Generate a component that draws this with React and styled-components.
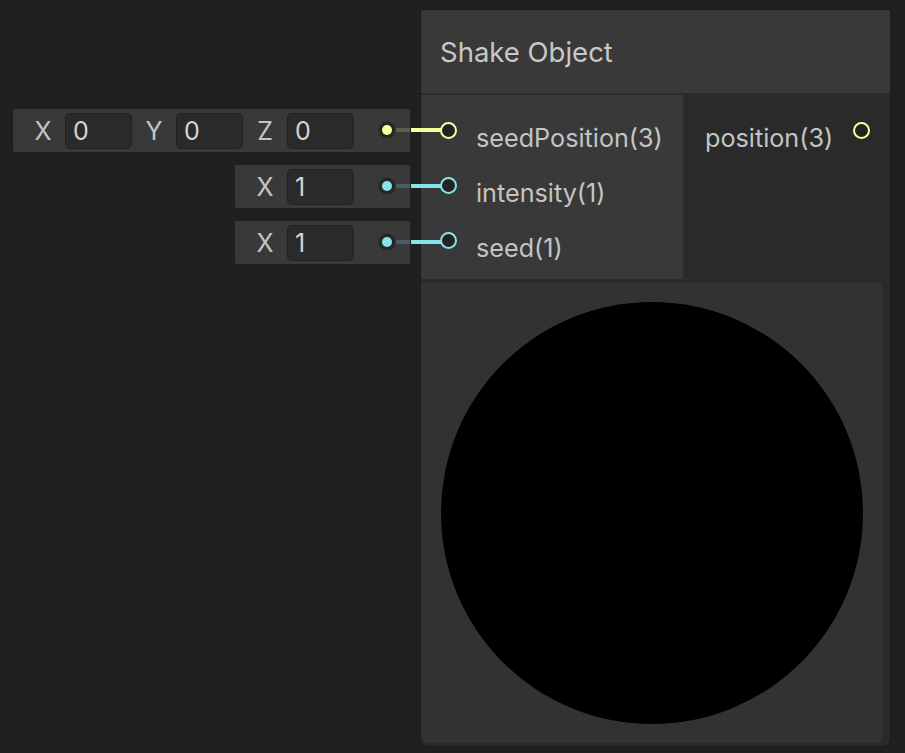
import React from "react";
import styled, { createGlobalStyle } from "styled-components";

const YELLOW = "#f6ff9a";
const CYAN = "#84e4e7";

const GlobalStyle = createGlobalStyle`
  html, body {
    margin: 0;
    padding: 0;
    background: #202020;
  }
  body {
    font-family: Inter, "Noto Sans", sans-serif;
    color: #c4c4c4;
  }
`;

const Canvas = styled.div`
  width: 905px;
  height: 753px;
  display: flex;
  align-items: flex-start;
  gap: 11px;
  padding: 10px 0 0 12px;
  box-sizing: border-box;
  overflow: hidden;
`;

const Inputs = styled.div`
  width: 398px;
  margin-top: 99px;
  display: flex;
  flex-direction: column;
  align-items: flex-end;
  gap: 13px;
`;

const InputRow = styled.div`
  position: relative;
  height: 43px;
  display: flex;
  align-items: center;
  padding-left: 8px;
  padding-right: 56px;
  background: #393939;
  border-radius: 2px;
`;

const Axis = styled.span`
  width: 44px;
  text-align: center;
  font-size: 25px;
  color: #c4c4c4;
`;

const Field = styled.div`
  width: 67px;
  height: 36px;
  box-sizing: border-box;
  border: 1px solid #212121;
  border-radius: 5px;
  background: #2a2a2a;
  padding-left: 7px;
  display: flex;
  align-items: center;
  font-size: 25px;
  color: #d4d4d4;
`;

const Edge = styled.svg`
  position: absolute;
  right: -48px;
  top: 11px;
  overflow: visible;
`;

const Node = styled.div`
  width: 469px;
  height: 736px;
  background: #2a2a2a;
  border-radius: 2px 2px 7px 7px;
  box-shadow: 0 0 0 1px #1c1c1c;
  display: flex;
  flex-direction: column;
  overflow: hidden;
`;

const Title = styled.div`
  height: 83px;
  flex-shrink: 0;
  background: #393939;
  border-bottom: 2px solid #2b2b2b;
  padding-left: 19px;
  display: flex;
  align-items: center;
  font-size: 27.5px;
  color: #c8c8c8;
`;

const Ports = styled.div`
  height: 184px;
  flex-shrink: 0;
  display: flex;
  border-bottom: 4px solid #2b2b2b;
`;

const InColumn = styled.div`
  width: 262px;
  background: #393939;
  border-right: 2px solid #2b2b2b;
  padding-top: 9px;
  display: flex;
  flex-direction: column;
`;

const OutColumn = styled.div`
  flex: 1;
  background: #2a2a2a;
  padding-top: 9px;
  display: flex;
  flex-direction: column;
`;

const PortRow = styled.div`
  height: 55px;
  display: flex;
  align-items: flex-start;
  gap: 19px;
  padding: 0 ${(p) => (p.$out ? "20px" : "0")} 0 ${(p) => (p.$out ? "20px" : "19px")};
  justify-content: ${(p) => (p.$out ? "space-between" : "flex-start")};
`;

const Socket = styled.div`
  width: 17px;
  height: 17px;
  margin-top: 18px;
  box-sizing: border-box;
  border-radius: 50%;
  border: 2px solid ${(p) => p.$color};
  background: #232323;
  flex-shrink: 0;
`;

const PortLabel = styled.span`
  font-size: 25.2px;
  line-height: 28px;
  margin-top: 20px;
  color: #c4c4c4;
`;

const Preview = styled.div`
  width: 461px;
  flex: 1;
  background: #323232;
  border-bottom-left-radius: 6px;
  border-bottom-right-radius: 6px;
  margin-bottom: 3px;
  display: flex;
  align-items: center;
  justify-content: center;
`;

const Ball = styled.div`
  width: 422px;
  height: 422px;
  border-radius: 50%;
  background: #000;
`;

const rows = [
  { fields: [["X", "0"], ["Y", "0"], ["Z", "0"]], color: YELLOW, dim: "#5e6046" },
  { fields: [["X", "1"]], color: CYAN, dim: "#475f60" },
  { fields: [["X", "1"]], color: CYAN, dim: "#475f60" },
];

const ports = [
  { name: "seedPosition(3)", color: YELLOW },
  { name: "intensity(1)", color: CYAN },
  { name: "seed(1)", color: CYAN },
];

function ValueRow({ fields, color, dim }) {
  return (
    <InputRow>
      {fields.map(([axis, value], i) => (
        <React.Fragment key={i}>
          <Axis>{axis}</Axis>
          <Field>{value}</Field>
        </React.Fragment>
      ))}
      <Edge width="80" height="20">
        <rect x="18" y="8" width="14" height="4" fill={dim} />
        <rect x="33" y="8" width="31" height="4" fill={color} />
        <circle cx="9" cy="10" r="8.5" fill="#262626" />
        <circle cx="9" cy="10" r="5" fill={color} />
      </Edge>
    </InputRow>
  );
}

export default function App() {
  return (
    <>
      <GlobalStyle />
      <Canvas>
        <Inputs>
          {rows.map((r, i) => (
            <ValueRow key={i} {...r} />
          ))}
        </Inputs>
        <Node>
          <Title>Shake Object</Title>
          <Ports>
            <InColumn>
              {ports.map((p) => (
                <PortRow key={p.name}>
                  <Socket $color={p.color} />
                  <PortLabel>{p.name}</PortLabel>
                </PortRow>
              ))}
            </InColumn>
            <OutColumn>
              <PortRow $out>
                <PortLabel>position(3)</PortLabel>
                <Socket $color={YELLOW} />
              </PortRow>
            </OutColumn>
          </Ports>
          <Preview>
            <Ball />
          </Preview>
        </Node>
      </Canvas>
    </>
  );
}
